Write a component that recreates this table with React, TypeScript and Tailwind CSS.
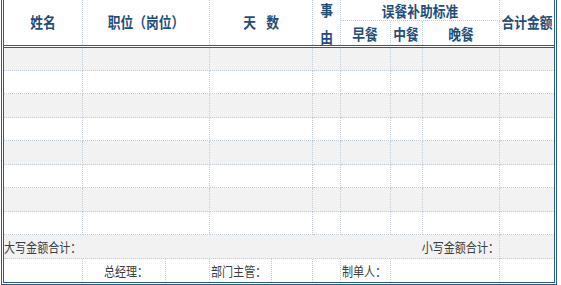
const cols = 'grid grid-cols-[79px_127px_103px_28px_50px_32px_77px_54px]';
const dot = 'border-dotted border-[#c3cdd8]';

const rowHeights = ['h-[23px]', 'h-[23px]', 'h-[24px]', 'h-[23px]', 'h-[24px]', 'h-[23px]', 'h-[24px]', 'h-[23px]'];

// the sheet font is narrow, squeeze glyphs a bit
function N({ children, origin = 'origin-center' }: { children: React.ReactNode; origin?: string }) {
  return <span className={`inline-block scale-x-[0.85] ${origin}`}>{children}</span>;
}

function DataRow({ h, gray }: { h: string; gray: boolean }) {
  return (
    <div className={`${cols} ${h} ${gray ? 'bg-[#f2f2f2]' : 'bg-white'}`}>
      {Array.from({ length: 8 }).map((_, i) => (
        <div key={i} className={`border-b ${dot} ${i < 7 ? 'border-r' : ''}`} />
      ))}
    </div>
  );
}

export default function App() {
  return (
    <div className="w-[561px] h-[285px] bg-white overflow-hidden font-['Noto_Sans_CJK_SC',sans-serif]">
      <div className="ml-px w-[556px] h-[285px] border-x-[3px] border-b-[3px] border-double border-[#2e5c8a]">
        {/* Header */}
        <div className={`${cols} grid-rows-[21px_24px] h-[48px] border-b-[3px] border-double border-[#2e5c8a] text-[15px] font-bold text-[#1f4e79] whitespace-nowrap`}>
          <div className={`row-span-2 border-r ${dot} flex items-center justify-center`}><N>姓名</N></div>
          <div className={`row-span-2 border-r ${dot} flex items-center justify-center`}><N>职位（岗位）</N></div>
          <div className={`row-span-2 border-r ${dot} flex items-center justify-center gap-[7px]`}>
            <N>天</N>
            <N>数</N>
          </div>
          <div className={`row-span-2 border-r ${dot} flex flex-col items-center justify-between leading-[17px] pt-[1px]`}>
            <N>事</N>
            <N>由</N>
          </div>
          <div className={`col-span-3 border-r border-b ${dot} flex items-center justify-center leading-[17px]`}><N>误餐补助标准</N></div>
          <div className="row-span-2 flex items-center justify-center"><N>合计金额</N></div>
          <div className={`border-r ${dot} flex items-center justify-center pt-[3px]`}><N>早餐</N></div>
          <div className={`border-r ${dot} flex items-center justify-center pt-[3px]`}><N>中餐</N></div>
          <div className={`border-r ${dot} flex items-center justify-center pt-[3px]`}><N>晚餐</N></div>
        </div>

        {rowHeights.map((h, i) => (
          <DataRow key={i} h={h} gray={i % 2 === 0} />
        ))}

        {/* Totals */}
        <div className="grid grid-cols-[496px_54px] h-[24px] bg-[#f2f2f2] text-[13px] text-[#3c3c3c] whitespace-nowrap">
          <div className={`border-r border-b ${dot} flex items-center justify-between`}>
            <N origin="origin-left">大写金额合计：</N>
            <N origin="origin-right">小写金额合计：</N>
          </div>
          <div className={`border-b ${dot}`} />
        </div>

        {/* Signatures */}
        <div className="grid grid-cols-[79px_83px_44px_62px_41px_28px_50px_109px_54px] h-[23px] bg-white text-[13px] text-[#3c3c3c] whitespace-nowrap">
          <div className={`border-r ${dot}`} />
          <div className={`border-r ${dot} flex items-center justify-center pl-[4px]`}><N>总经理：</N></div>
          <div className={`border-r ${dot}`} />
          <div className={`border-r ${dot} flex items-center pl-[1px]`}><N origin="origin-left">部门主管：</N></div>
          <div className={`border-r ${dot}`} />
          <div className={`border-r ${dot}`} />
          <div className={`border-r ${dot} flex items-center pl-[1px]`}><N origin="origin-left">制单人：</N></div>
          <div className={`border-r ${dot}`} />
          <div />
        </div>
      </div>
    </div>
  );
}
